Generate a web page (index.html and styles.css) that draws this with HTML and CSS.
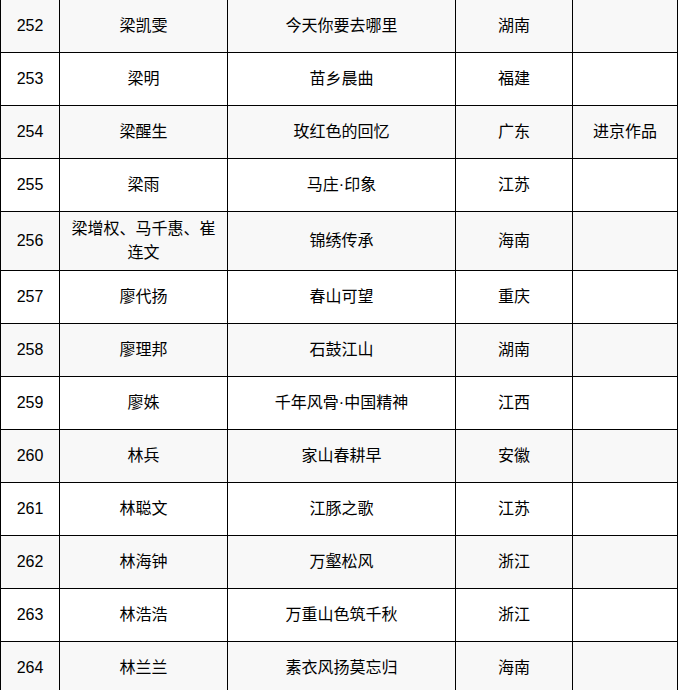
FILE: index.html
```html
<!DOCTYPE html>
<html lang="zh">
<head>
<meta charset="utf-8">
<link rel="stylesheet" href="styles.css">
</head>
<body>
<table class="list">
  <colgroup>
    <col class="c-no"><col class="c-name"><col class="c-title"><col class="c-prov"><col class="c-note">
  </colgroup>
  <tbody>
    <tr class="alt"><td>252</td><td>梁凯雯</td><td>今天你要去哪里</td><td>湖南</td><td></td></tr>
    <tr><td>253</td><td>梁明</td><td>苗乡晨曲</td><td>福建</td><td></td></tr>
    <tr class="alt"><td>254</td><td>梁醒生</td><td>玫红色的回忆</td><td>广东</td><td>进京作品</td></tr>
    <tr><td>255</td><td>梁雨</td><td>马庄·印象</td><td>江苏</td><td></td></tr>
    <tr class="alt"><td>256</td><td>梁增权、马千惠、崔连文</td><td>锦绣传承</td><td>海南</td><td></td></tr>
    <tr><td>257</td><td>廖代扬</td><td>春山可望</td><td>重庆</td><td></td></tr>
    <tr class="alt"><td>258</td><td>廖理邦</td><td>石鼓江山</td><td>湖南</td><td></td></tr>
    <tr><td>259</td><td>廖姝</td><td>千年风骨·中国精神</td><td>江西</td><td></td></tr>
    <tr class="alt"><td>260</td><td>林兵</td><td>家山春耕早</td><td>安徽</td><td></td></tr>
    <tr><td>261</td><td>林聪文</td><td>江豚之歌</td><td>江苏</td><td></td></tr>
    <tr class="alt"><td>262</td><td>林海钟</td><td>万壑松风</td><td>浙江</td><td></td></tr>
    <tr><td>263</td><td>林浩浩</td><td>万重山色筑千秋</td><td>浙江</td><td></td></tr>
    <tr class="alt"><td>264</td><td>林兰兰</td><td>素衣风扬莫忘归</td><td>海南</td><td></td></tr>
  </tbody>
</table>
</body>
</html>
```

FILE: styles.css
```css
html, body {
  margin: 0;
  padding: 0;
  background: #ffffff;
}

.list {
  margin-top: -1px;
  width: 677px;
  table-layout: fixed;
  border-collapse: collapse;
  font-family: "Liberation Sans", "Noto Sans CJK SC", sans-serif;
  font-size: 16px;
  color: #000000;
}

.c-no { width: 59px; }
.c-name { width: 168px; }
.c-title { width: 228px; }
.c-prov { width: 117px; }
.c-note { width: 105px; }

.list td {
  border: 1px solid #000000;
  height: 42px;
  padding: 5px 6px;
  line-height: 24px;
  text-align: center;
  vertical-align: middle;
  box-sizing: content-box;
}

.list tr.alt td {
  background: #f8f8f8;
}
```
